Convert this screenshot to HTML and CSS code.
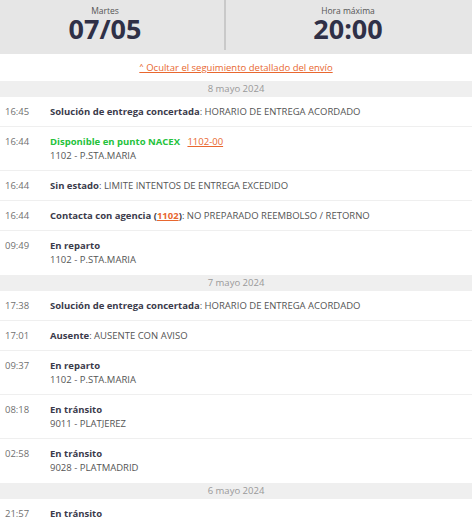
FILE: index.html
```html
<!DOCTYPE html>
<html lang="es">
<head>
<meta charset="utf-8">
<link rel="stylesheet" href="styles.css">
</head>
<body>
<div class="page">
  <header class="summary">
    <div class="col col-left">
      <div class="lbl">Martes</div>
      <div class="big">07/05</div>
    </div>
    <div class="divider"></div>
    <div class="col col-right">
      <div class="lbl">Hora máxima</div>
      <div class="big">20:00</div>
    </div>
  </header>
  <div class="toggle"><a href="#">˄ Ocultar el seguimiento detallado del envío</a></div>

  <div class="day">8 mayo 2024</div>
  <div class="row"><span class="t">16:45</span><div class="d"><div><b>Solución de entrega concertada</b>: HORARIO DE ENTREGA ACORDADO</div></div></div>
  <div class="row"><span class="t">16:44</span><div class="d"><div><b class="green">Disponible en punto NACEX</b> <a class="code" href="#">1102-00</a></div><div>1102 - P.STA.MARIA</div></div></div>
  <div class="row"><span class="t">16:44</span><div class="d"><div><b>Sin estado</b>: LIMITE INTENTOS DE ENTREGA EXCEDIDO</div></div></div>
  <div class="row"><span class="t">16:44</span><div class="d"><div><b>Contacta con agencia (<a class="ag" href="#">1102</a>)</b>: NO PREPARADO REEMBOLSO / RETORNO</div></div></div>
  <div class="row last"><span class="t">09:49</span><div class="d"><div><b>En reparto</b></div><div>1102 - P.STA.MARIA</div></div></div>

  <div class="day">7 mayo 2024</div>
  <div class="row"><span class="t">17:38</span><div class="d"><div><b>Solución de entrega concertada</b>: HORARIO DE ENTREGA ACORDADO</div></div></div>
  <div class="row"><span class="t">17:01</span><div class="d"><div><b>Ausente</b>: AUSENTE CON AVISO</div></div></div>
  <div class="row"><span class="t">09:37</span><div class="d"><div><b>En reparto</b></div><div>1102 - P.STA.MARIA</div></div></div>
  <div class="row"><span class="t">08:18</span><div class="d"><div><b>En tránsito</b></div><div>9011 - PLATJEREZ</div></div></div>
  <div class="row last"><span class="t">02:58</span><div class="d"><div><b>En tránsito</b></div><div>9028 - PLATMADRID</div></div></div>

  <div class="day">6 mayo 2024</div>
  <div class="row"><span class="t">21:57</span><div class="d"><div><b>En tránsito</b></div></div></div>
</div>
</body>
</html>
```
FILE: styles.css
```css
html, body {
  margin: 0;
  padding: 0;
  background: #ffffff;
}
body {
  font-family: "Open Sans", "Lato", sans-serif;
  font-size: 9.5px;
  color: #555;
}
.page {
  width: 472px;
  overflow: hidden;
}
.summary {
  display: grid;
  grid-template-columns: 210px 2px 1fr;
  column-gap: 14px;
  height: 54px;
  background: #e6e6e6;
}
.col {
  display: flex;
  flex-direction: column;
  align-items: center;
  padding-top: 6px;
}
.col-right {
  padding-right: 16px;
}
.lbl {
  font-size: 8.5px;
  line-height: 10px;
  color: #555;
}
.big {
  font-size: 27px;
  line-height: 25px;
  font-weight: 700;
  color: #2f3047;
}
.divider {
  background: #c9c9c9;
  height: 50px;
}
.toggle {
  height: 27px;
  display: flex;
  align-items: center;
  justify-content: center;
}
.toggle a {
  color: #e8672f;
  text-decoration: underline;
  font-size: 9.5px;
}
.day {
  height: 16px;
  line-height: 16px;
  background: #efefef;
  color: #999;
  text-align: center;
  font-size: 9.5px;
}
.row {
  display: flex;
  padding: 8px 0 7px 5px;
  border-bottom: 1px solid #efefef;
  line-height: 14px;
}
.row.last {
  border-bottom: none;
  padding-bottom: 8px;
}
.t {
  width: 45px;
  flex: none;
  color: #707070;
}
.d {
  flex: 1;
}
.d b {
  font-weight: 700;
  color: #3b3b4b;
}
.d b.green {
  color: #25c23c;
}
a.code {
  color: #e8672f;
  margin-left: 5px;
}
a.ag {
  color: #e8672f;
}
```
